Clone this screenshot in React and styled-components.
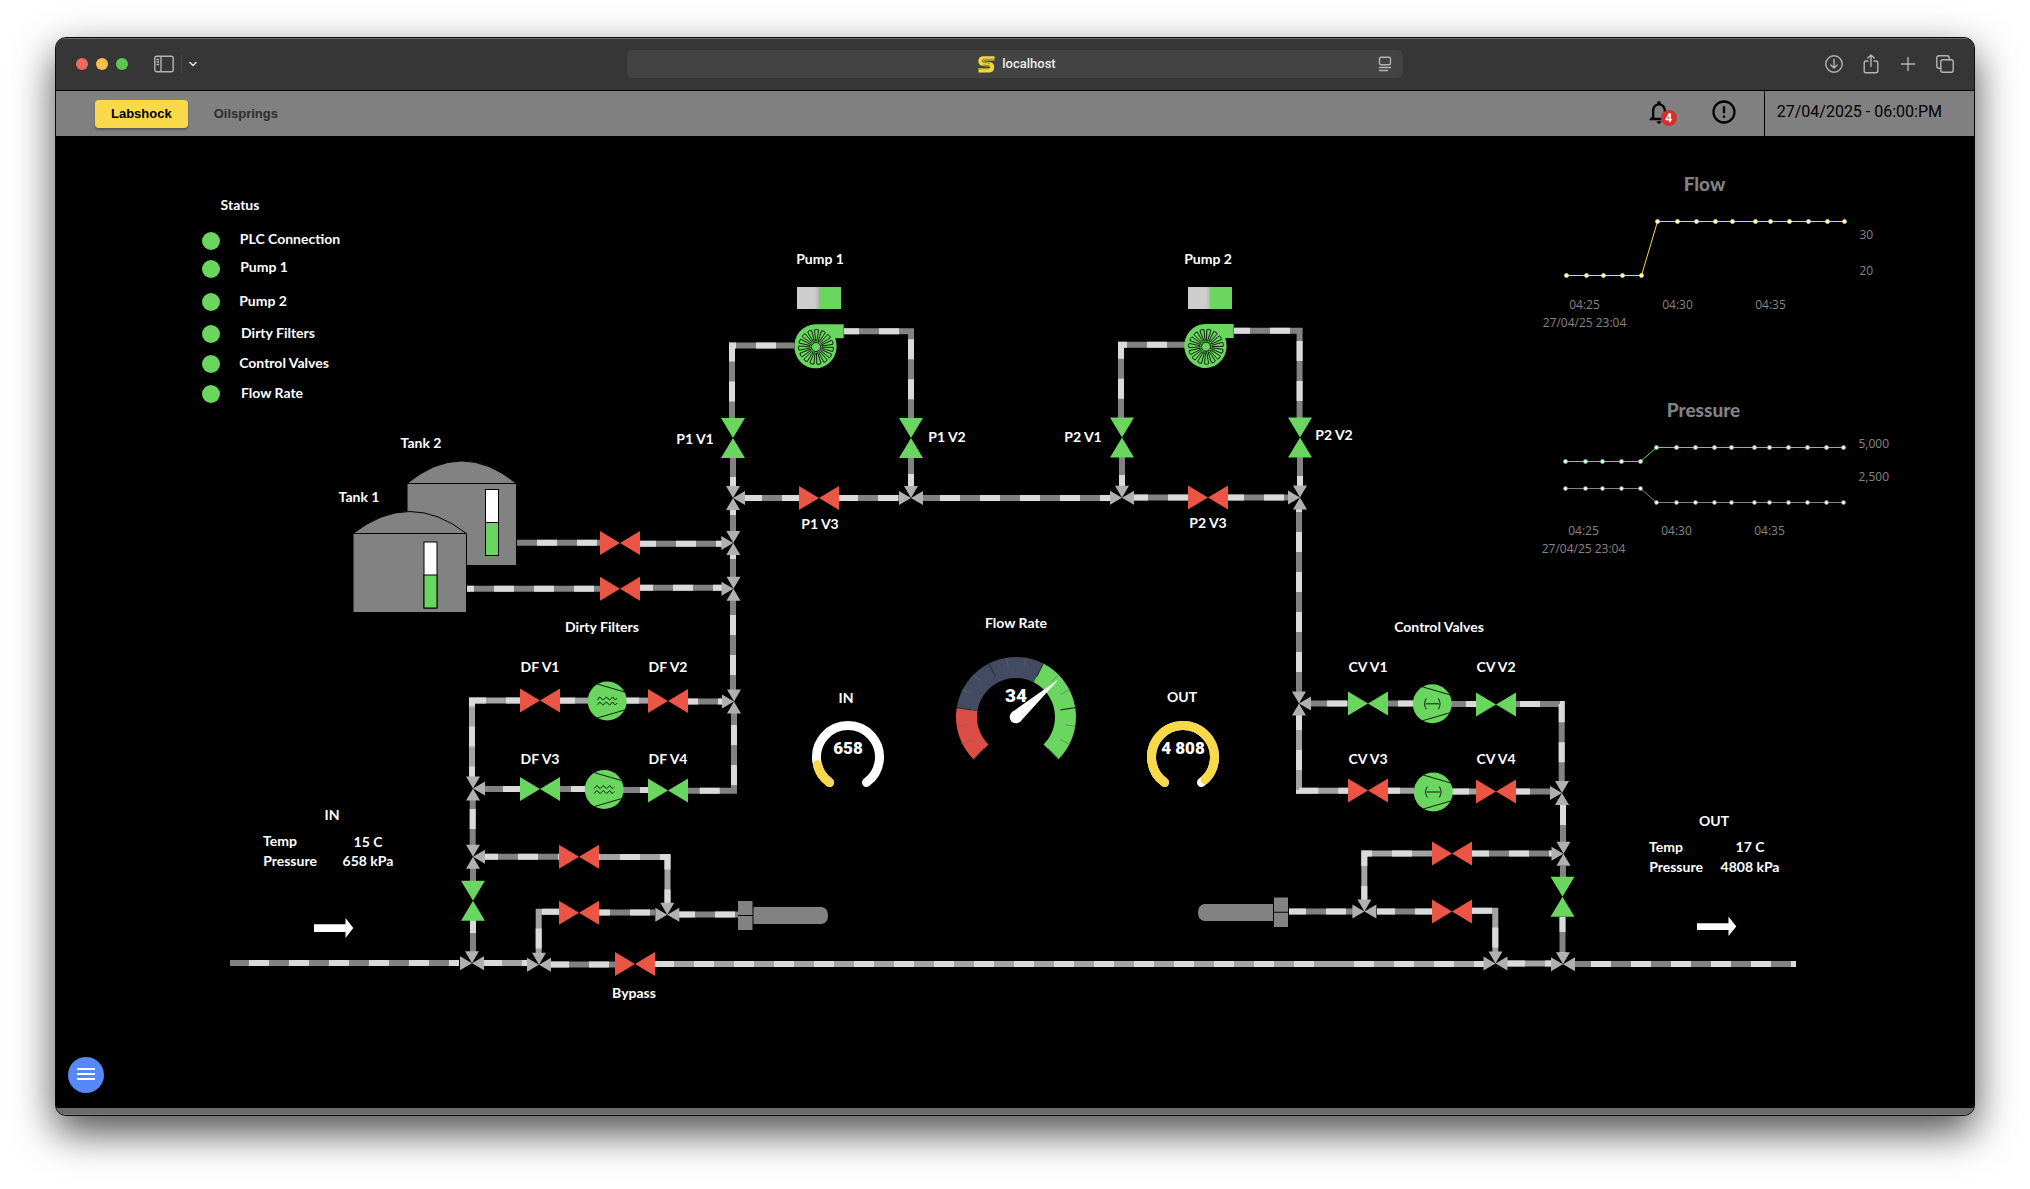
import React from "react";
import styled, { createGlobalStyle } from "styled-components";
import { MdNotificationsNone, MdErrorOutline } from "react-icons/md";

const GREEN = "#6ad55f";
const RED = "#eb5545";
const YELLOW = "#f9d949";
const STEEL = "#828282";
const LIGHT = "#dadada";
const ARROW = "#b0b0b0";

/* Diagram coordinates are window based; the stage starts at this point. */
const OX = 56;
const OY = 136;

const GlobalStyle = createGlobalStyle`
  * { box-sizing: border-box; }
  body { margin: 0; background: #fff; font-family: "Liberation Sans", Arial, sans-serif; }
  button { font: inherit; border: 0; padding: 0; background: none; cursor: pointer; }
`;

const Page = styled.div`
  display: flex;
  min-height: 100vh;
  padding: 37px 55px 73px;
`;

const BrowserWindow = styled.div`
  flex: 1;
  min-width: 0;
  display: flex;
  flex-direction: column;
  overflow: hidden;
  border: 1px solid #0a0a0a;
  border-radius: 11px;
  background: #6b6b6b;
  box-shadow: 0 16px 40px rgba(0, 0, 0, 0.7);
`;

const Toolbar = styled.div`
  display: grid;
  grid-template-columns: 1fr minmax(0, 776px) 1fr;
  align-items: center;
  height: 53px;
  padding: 0 20px 1px;
  background: #363636;
  border-top: 1px solid #6a6a6a;
  border-bottom: 1px solid #000;
`;

const ToolGroup = styled.div`
  display: flex;
  align-items: center;
  justify-content: ${(p) => (p.$end ? "flex-end" : "flex-start")};
  gap: ${(p) => p.$gap}px;
`;

const SidebarGroup = styled.div`
  display: flex;
  align-items: center;
  gap: 7px;
  margin-left: 18px;
`;

const Light = styled.button`
  width: 12px;
  height: 12px;
  border-radius: 50%;
  background: ${(p) => p.$color};
`;

const ToolButton = styled.button`
  display: flex;
  color: #b4b4b4;
`;

const ToolDivider = styled.span`
  width: 1px;
  height: 18px;
  background: #4a4a4a;
`;

const AddressBar = styled.div`
  display: grid;
  grid-template-columns: 1fr auto 1fr;
  align-items: center;
  height: 28px;
  padding: 0 11px;
  border-radius: 6px;
  background: #434343;
`;

const Address = styled.button`
  grid-column: 2;
  display: flex;
  align-items: center;
  gap: 7px;
  padding-left: 4px;
  color: #ececec;
  font: 500 13px/16px Roboto, sans-serif;
`;

const ReaderSlot = styled(ToolButton)`
  justify-self: end;
`;

const Header = styled.header`
  display: flex;
  align-items: stretch;
  justify-content: space-between;
  height: 45px;
  background: #808080;
`;

const Nav = styled.nav`
  display: flex;
  align-items: center;
  gap: 10px;
  padding-left: 39px;
`;

const Tab = styled.button`
  height: 28px;
  padding: 0 16px;
  border-radius: 4px;
  font-weight: 700;
  font-size: 13px;
  line-height: 28px;
  color: ${(p) => (p.$active ? "#000" : "#2e2e2e")};
  background: ${(p) => (p.$active ? YELLOW : "transparent")};
  box-shadow: ${(p) => (p.$active ? "0 2px 2px rgba(0,0,0,.3)" : "none")};
`;

const HeaderTools = styled.div`
  display: flex;
  align-items: center;
`;

const IconButton = styled.button`
  position: relative;
  display: flex;
  margin-right: ${(p) => p.$space}px;
  margin-bottom: 4px;
  color: #000;
`;

const Badge = styled.span`
  position: absolute;
  left: 16px;
  top: 12px;
  width: 16px;
  height: 16px;
  border-radius: 50%;
  background: #d32f2f;
  color: #fff;
  font: 700 12px/16px Roboto, sans-serif;
  text-align: center;
`;

const Clock = styled.time`
  display: flex;
  align-items: center;
  align-self: stretch;
  padding: 0 32px 3px 12px;
  border-left: 1px solid #000;
  font: 400 16px/20px Roboto, sans-serif;
  color: #000;
`;

const Stage = styled.main`
  position: relative;
  flex: 1;
  min-height: 972px;
  overflow: hidden;
  background: #000;
`;

const StatusBar = styled.div`
  height: 7px;
  background: #6b6b6b;
  border-bottom: 1px solid #7d7d7d;
`;

const Diagram = styled.svg`
  position: absolute;
  inset: 0 auto auto 0;
  display: block;
`;

const Label = styled.span`
  position: absolute;
  left: ${(p) => p.$x - OX - 60}px;
  top: ${(p) => p.$y - OY - 10}px;
  width: 120px;
  color: #fff;
  font-family: ${(p) => (p.$size ? "Roboto" : "Lato")}, sans-serif;
  font-weight: ${(p) => (p.$size ? 900 : 700)};
  font-size: ${(p) => p.$size || 14}px;
  line-height: 20px;
  text-align: center;
  white-space: nowrap;
  pointer-events: none;
`;

const StatusDot = styled.span`
  position: absolute;
  left: ${202 - OX}px;
  top: ${(p) => p.$y - OY - 9}px;
  width: 18px;
  height: 18px;
  border-radius: 50%;
  background: ${GREEN};
`;

const Switch = styled.input`
  appearance: none;
  position: absolute;
  left: ${(p) => p.$x - OX}px;
  top: ${287 - OY}px;
  width: 44px;
  height: 22px;
  margin: 0;
  background: linear-gradient(90deg, #cdcdcd 0 18px, #b5b5b5 22px, ${GREEN} 22px);
  cursor: pointer;
`;

const MenuButton = styled.button`
  position: absolute;
  left: 12px;
  bottom: 15px;
  width: 36px;
  height: 36px;
  display: flex;
  flex-direction: column;
  align-items: center;
  justify-content: center;
  gap: 3px;
  padding-bottom: 2px;
  border-radius: 50%;
  background: #5788f7;
`;

const MenuLine = styled.span`
  width: 18px;
  height: 2px;
  background: #fff;
`;

const AxisText = styled.text`
  font: 400 12px "Open Sans", sans-serif;
  fill: #858585;
`;

const ChartTitle = styled.text`
  font: 900 19px Lato, sans-serif;
  fill: #828282;
  text-anchor: middle;
`;

/* [points, distance of the first light dash, base colour] */
const SOFT = "#a3a3a3";
const PIPES = [
  ["794,345.5 732,345.5 732,418", 18],
  ["844,331.3 911,331.3 911,418", -5],
  ["733,458 733,487", 19],
  ["911,458 911,488", 16],
  ["744,498 799,498", -2],
  ["839,498 900,498", -1],
  ["923,498 1111,498", 17],
  ["733,509 733,532", -14],
  ["733,555 733,578", -16],
  ["733,600 733,691", 15],
  ["517,542.7 600,542.7", 20],
  ["640,543.7 722,543.7", -4],
  ["467,588.7 600,588.7", 27],
  ["640,587.7 722,587.7", -7],
  ["1185,344.7 1121,344.7 1121,418", 18],
  ["1234,330.7 1299.6,330.7 1299.6,418", -4],
  ["1122,457 1122,487", 18],
  ["1300,457 1300,486", 19],
  ["1134,497.5 1188,497.5", -6],
  ["1228,497.5 1289,497.5", -4],
  ["1299,509 1299,692", 23],
  ["734,713 734,790.7 688,790.7", 12],
  ["560,789 585,789", 11],
  ["623,790 648,790", 17],
  ["484,789 520,789", 19],
  ["520,700.5 472,700.5 472,777", -6, SOFT],
  ["560,700.6 588,700.6", -5, SOFT],
  ["626,700.6 648,700.6", -7, SOFT],
  ["688,701.6 722,701.6", -10],
  ["472.7,800 472.7,845", 9],
  ["484,856.7 559,856.7", -6],
  ["599,857 667.5,857 667.5,904", 21, SOFT],
  ["679,914.4 738,914.4", -4],
  ["599,912.6 655,912.6", -9],
  ["559,911.7 538.7,911.7 538.7,954", -3, SOFT],
  ["473,868 473,881", 20],
  ["473,920 473,952", -7],
  ["230,963 459,963", 19],
  ["484,963 527,963", -2, SOFT],
  ["551,964.4 615,964.4", -2],
  ["655,964 1334,964", -1, SOFT],
  ["1334,964 1484,964", 20, SOFT],
  ["1507,963.6 1551,963.6", -2, SOFT],
  ["1575,964 1796,964", 16],
  ["1310,703.5 1348,703.5", 17],
  ["1388,703.5 1413,703.5", 10],
  ["1451,704 1476,704", 15],
  ["1516,704 1561.7,704 1561.7,782", 4],
  ["1299,715 1299,790.7 1348,790.7", -5, SOFT],
  ["1388,790.7 1414,790.7", -8, SOFT],
  ["1452,791.5 1476,791.5", -3, SOFT],
  ["1516,791.6 1551,791.6", -6],
  ["1563,805 1563,843", 0],
  ["1472,853.6 1553,853.6", -3],
  ["1432,853.6 1364.3,853.6 1364.3,901", 20, SOFT],
  ["1289,911.4 1353,911.4", -3],
  ["1377,911.4 1432,911.4", -2],
  ["1472,910.7 1495.3,910.7 1495.3,952", 0, SOFT],
  ["1563,866 1563,878", 20],
  ["1562.5,917 1562.5,953", -5],
];

/* [x, y, vertical, open] */
const VALVES = [
  [733, 438, 1, 1], [911, 438, 1, 1], [1122, 437.5, 1, 1], [1300, 437.5, 1, 1],
  [819, 498, 0, 0], [1208, 497.5, 0, 0], [620, 543, 0, 0], [620, 588.7, 0, 0],
  [540, 700.6, 0, 0], [668, 701, 0, 0], [540, 789, 0, 1], [668, 790.5, 0, 1],
  [579, 856.7, 0, 0], [579, 912.7, 0, 0], [635, 964, 0, 0], [473, 900.7, 1, 1],
  [1368, 703.5, 0, 1], [1496, 704.5, 0, 1], [1368, 790.6, 0, 0], [1496, 791.5, 0, 0],
  [1452, 853.5, 0, 0], [1452, 911.5, 0, 0], [1562.5, 896.8, 1, 1],
];

const JUNCTIONS = [
  [733, 498, "TRB"], [911, 498, "LTR"], [733.3, 543, "TBL"], [733.5, 588.7, "TBL"],
  [1122, 497.8, "LTR"], [1300, 497.5, "TBL"], [734, 701.5, "TBL"], [473, 788.6, "TRB"],
  [473, 856.8, "TRB"], [667.3, 914.7, "LTR"], [472, 963.3, "LTR"], [539, 964.7, "LTR"],
  [1299, 703.6, "TRB"], [1562, 793, "TBL"], [1563.5, 853.8, "TBL"], [1364.4, 911.6, "LTR"],
  [1495.5, 963.5, "LTR"], [1563, 964.2, "LTR"],
];

const LABELS = [
  ["Status", 240, 205], ["PLC Connection", 290, 239], ["Pump 1", 264, 267], ["Pump 2", 263, 301],
  ["Dirty Filters", 278, 333], ["Control Valves", 284, 363], ["Flow Rate", 272, 393],
  ["Tank 2", 421, 443], ["Tank 1", 359, 497], ["Pump 1", 820, 259], ["Pump 2", 1208, 259],
  ["P1 V1", 695, 439], ["P1 V2", 947, 437], ["P1 V3", 820, 524],
  ["P2 V1", 1083, 437], ["P2 V2", 1334, 435], ["P2 V3", 1208, 523],
  ["Dirty Filters", 602, 627], ["DF V1", 540, 667], ["DF V2", 668, 667], ["DF V3", 540, 759], ["DF V4", 668, 759],
  ["Flow Rate", 1016, 623], ["IN", 846, 698], ["OUT", 1182, 697],
  ["Control Valves", 1439, 627], ["CV V1", 1368, 667], ["CV V2", 1496, 667], ["CV V3", 1368, 759], ["CV V4", 1496, 759],
  ["Bypass", 634, 993],
  ["IN", 332, 815], ["Temp", 280, 841], ["15 C", 368, 842], ["Pressure", 290, 861], ["658 kPa", 368, 861],
  ["OUT", 1714, 821], ["Temp", 1666, 847], ["17 C", 1750, 847], ["Pressure", 1676, 867], ["4808 kPa", 1750, 867],
  ["34", 1016, 696, 19], ["658", 848, 748, 17], ["4 808", 1183, 748, 17],
];

const polar = (cx, cy, r, deg) => {
  const a = (deg * Math.PI) / 180;
  return [cx + r * Math.cos(a), cy + r * Math.sin(a)];
};

const arc = (cx, cy, r, a, b) => {
  const [x1, y1] = polar(cx, cy, r, a);
  const [x2, y2] = polar(cx, cy, r, b);
  return `M${x1} ${y1}A${r} ${r} 0 ${b - a > 180 ? 1 : 0} 1 ${x2} ${y2}`;
};

function Pipe({ points, start, base = STEEL }) {
  return (
    <g fill="none" strokeWidth="6">
      <polyline points={points} stroke={base} />
      <polyline points={points} stroke={LIGHT} strokeDasharray="20 20" strokeDashoffset={-start} />
    </g>
  );
}

function Valve({ x, y, vertical, open }) {
  return (
    <path
      transform={`translate(${x} ${y})${vertical ? " rotate(90)" : ""}`}
      d="M-20-12L0 0L-20 12ZM20-12L0 0L20 12Z"
      fill={open ? GREEN : RED}
    />
  );
}

const TURN = { L: 0, T: 90, R: 180, B: 270 };

function Junction({ x, y, sides }) {
  return (
    <g transform={`translate(${x} ${y})`} fill={ARROW}>
      {[...sides].map((s) => (
        <path key={s} transform={`rotate(${TURN[s]})`} d="M-12-7L0 0L-12 7Z" />
      ))}
    </g>
  );
}

function Pump({ x, y, turn }) {
  return (
    <g transform={`translate(${x} ${y})`}>
      <path d="M0-22H28V-8H19.5A21.2 22 0 1 1 0-22Z" fill={GREEN} />
      <g transform="translate(0.3 0.7)" fill="none" stroke="#000" strokeWidth=".8">
        {Array.from({ length: 15 }, (_, i) => (
          <path key={i} transform={`rotate(${turn + i * 24})`} d="M-.6-6L-2.100-17Q0-18.200 2.100-17L.6-6Z" />
        ))}
        <circle r="4.600" fill={GREEN} strokeWidth="1" />
      </g>
    </g>
  );
}

function Tank({ x, y, width, height, dome, level }) {
  return (
    <g>
      <path
        d={`M${x} ${y}Q${x + width / 2} ${y - dome * 2} ${x + width} ${y}V${y + height}H${x}Z`}
        fill={STEEL}
        stroke="#000"
      />
      <path d={`M${x} ${y}H${x + width}`} stroke="#000" />
      <rect x={level[0]} y={level[1]} width="13" height="66" fill="#fff" stroke="#000" />
      <rect x={level[0]} y={level[1] + 33} width="13" height="33" fill={GREEN} stroke="#000" />
    </g>
  );
}

function Unit({ x, y, kind }) {
  return (
    <g transform={`translate(${x} ${y})`} fill="none" stroke="#0b1f09" strokeWidth="1">
      <circle r="19.5" fill={GREEN} stroke="none" />
      <path d="M-10-17L17.5-9M17.5 9L-10 17" />
      {kind === "filter" ? (
        <path d="M-10-1L-7.5-4L-4-1L-1-4L2.5-1L5.5-4L8-1L10-3M-10 4L-7.5 1L-4 4L-1 1L2.5 4L5.5 1L8 4L10 2" />
      ) : (
        <path d="M-6-5.5Q-9.5 0-6 5.5M6-5.5Q9.5 0 6 5.5M-6.5 0H6.5" />
      )}
    </g>
  );
}

function RingGauge({ x, y, end }) {
  return (
    <g fill="none" strokeWidth="9" strokeLinecap="round">
      <path d={arc(x, y, 31.5, 126, 414)} stroke="#fff" />
      <path d={arc(x, y, 31.5, 126, end)} stroke={YELLOW} />
    </g>
  );
}

function FlowGauge({ x, y }) {
  const zones = [[135, 189, "#dc4e45"], [189, 297, "#434b63"], [297, 405, GREEN]];
  return (
    <g>
      {zones.map(([a, b, c]) => (
        <path key={a} d={arc(x, y, 49.5, a, b)} stroke={c} strokeWidth="21" fill="none" />
      ))}
      {Array.from({ length: 16 }, (_, i) => {
        const major = i % 3 === 0;
        const [x1, y1] = polar(x, y, 60, 135 + i * 18);
        const [x2, y2] = polar(x, y, major ? 45 : 50, 135 + i * 18);
        return (
          <line key={i} x1={x1} y1={y1} x2={x2} y2={y2}
            stroke={major ? "#333" : "#666"} strokeOpacity={major ? 1 : 0.8} strokeWidth={major ? 1.3 : 0.8} />
        );
      })}
      <g transform={`translate(${x} ${y}) rotate(318.6)`} fill="#fff">
        <circle r="6.3" />
        <path d="M0-6.3L57 0L0 6.3Z" />
      </g>
    </g>
  );
}

const SAMPLES = [0, 20, 37, 56, 75, 91, 111, 130, 149, 166, 189, 204, 223, 242, 261, 278];

function Trend({ title, x, y, lines, axis }) {
  return (
    <g transform={`translate(${x} ${y})`}>
      <ChartTitle x="138" y="-31">{title}</ChartTitle>
      {lines.map(({ color, low, high }) => {
        const pts = SAMPLES.map((s, i) => [s, i < 5 ? low : high]);
        return (
          <g key={color}>
            <polyline points={pts.join(" ")} fill="none" stroke={color} strokeWidth="1" />
            {pts.map(([px, py]) => (
              <circle key={px} cx={px} cy={py} r="2" fill="#fff" stroke={color} strokeWidth=".8" />
            ))}
          </g>
        );
      })}
      {axis.map(([t, ay]) => (
        <AxisText key={t} x="293" y={ay}>{t}</AxisText>
      ))}
      <AxisText x="18" y="87" textAnchor="middle">04:25</AxisText>
      <AxisText x="111" y="87" textAnchor="middle">04:30</AxisText>
      <AxisText x="204" y="87" textAnchor="middle">04:35</AxisText>
      <AxisText x="18" y="105" textAnchor="middle">27/04/25 23:04</AxisText>
    </g>
  );
}

function PlantDiagram() {
  return (
    <Diagram width="1918" height="972" viewBox={`${OX} ${OY} 1918 972`} role="img" aria-label="Plant overview">
      <Tank x={407} y={483.5} width={109.5} height={82} dome={22.5} level={[485.5, 489.5]} />
      <Tank x={353} y={533.5} width={113.5} height={79} dome={22} level={[424, 542]} />
      {PIPES.map(([points, start, base]) => (
        <Pipe key={points} points={points} start={start} base={base} />
      ))}
      {VALVES.map(([x, y, vertical, open]) => (
        <Valve key={`${x}-${y}`} x={x} y={y} vertical={vertical} open={open} />
      ))}
      {JUNCTIONS.map(([x, y, sides]) => (
        <Junction key={`${x}-${y}`} x={x} y={y} sides={sides} />
      ))}
      <Pump x={815.7} y={346.3} turn={2} />
      <Pump x={1205.7} y={346} turn={10} />
      <Unit x={607.2} y={701} kind="filter" />
      <Unit x={604.2} y={789.6} kind="filter" />
      <Unit x={1432.3} y={703.8} kind="control" />
      <Unit x={1433.3} y={792} kind="control" />
      <g fill={STEEL}>
        <path d="M738 901h14.5v14H738ZM738 916h14.5v14H738ZM753.5 907H822q6 1 6 8.5t-6 8.5H753.5Z" />
        <path d="M1274 897.5h14v14.3h-14ZM1274 912.8h14v14.2h-14ZM1273 904H1204q-6 1-6 8.5t6 8.5H1273Z" />
      </g>
      <g fill="#fff">
        <path d="M314 924.3H345.5V918L353.3 928L345.5 938V932H314Z" />
        <path d="M1697 923.3H1728.5V916.5L1736.3 926.5L1728.5 936V930H1697Z" />
      </g>
      <RingGauge x={848} y={757} end={166} />
      <RingGauge x={1183} y={757} end={406} />
      <FlowGauge x={1016} y={717} />
      <Trend
        title="Flow" x={1566.5} y={221.5}
        lines={[{ color: YELLOW, low: 54, high: 0 }]}
        axis={[["30", 17], ["20", 53]]}
      />
      <Trend
        title="Pressure" x={1565.5} y={447.5}
        lines={[{ color: GREEN, low: 14, high: 0 }, { color: "#858585", low: 41, high: 55 }]}
        axis={[["5,000", 0], ["2,500", 33]]}
      />
    </Diagram>
  );
}

const Glyph = ({ children, size = 18, width = size }) => (
  <svg width={width} height={size} viewBox={`0 0 ${width} ${size}`} fill="none" stroke="currentColor"
    strokeWidth="1.4" strokeLinecap="round" strokeLinejoin="round" aria-hidden="true">
    {children}
  </svg>
);

function SafariBar() {
  return (
    <Toolbar>
      <ToolGroup $gap={8}>
        <Light $color="#ed6a5e" aria-label="Close" />
        <Light $color="#f5bf4f" aria-label="Minimize" />
        <Light $color="#61c554" aria-label="Zoom" />
        <SidebarGroup>
          <ToolButton aria-label="Show sidebar">
            <Glyph size={18} width={20}>
              <rect x="0.8" y="1.2" width="18.4" height="15.6" rx="2" />
              <path d="M7 1.5V16.5M3 4.5H4.6M3 7H4.6M3 9.5H4.6" />
            </Glyph>
          </ToolButton>
          <ToolDivider />
          <ToolButton aria-label="Tab groups">
            <Glyph size={8} width={8}><path strokeWidth="1.6" d="M1 2.5L4 5.5L7 2.5" stroke="#ddd" /></Glyph>
          </ToolButton>
        </SidebarGroup>
      </ToolGroup>
      <AddressBar>
        <Address>
          <svg width="17" height="17" viewBox="0 0 17 17" fill="none" aria-hidden="true">
            <path d="M16.5 2.4H6Q2.5 2.4 2.5 5Q2.500 7.500 5.500 7.700L11 8.200Q14 8.500 14 11.200Q14 14.300 10.500 14.300H.5" stroke="#f4d73f" strokeWidth="4.400" />
            <path d="M16.500 3.200H6.500Q4 3.400 4 5Q4 6.400 6 6.600L12 7.300M1 12.800H9.500Q12 12.600 12 11Q12 9.700 10 9.500L5 9" stroke="#6a6020" strokeWidth=".7" />
          </svg>
          localhost
        </Address>
        <ReaderSlot aria-label="Page menu">
          <Glyph size={16} width={14}>
            <rect x="1.5" y="1.2" width="11" height="7.5" rx="1.5" />
            <path d="M1.5 11.5H12.5M1.5 14.5H9.5" />
          </Glyph>
        </ReaderSlot>
      </AddressBar>
      <ToolGroup $gap={19} $end>
        <ToolButton aria-label="Downloads">
          <Glyph><circle cx="9" cy="9" r="8.2" /><path d="M9 4.500V13M5.800 10L9 13L12.200 10" /></Glyph>
        </ToolButton>
        <ToolButton aria-label="Share">
          <Glyph size={20} width={18}><path d="M6 7H4Q2.200 7 2.200 8.800V17Q2.200 18.800 4 18.800H14Q15.800 18.800 15.800 17V8.800Q15.800 7 14 7H12M9 12.500V1M5.800 4L9 1L12.200 4" /></Glyph>
        </ToolButton>
        <ToolButton aria-label="New tab">
          <Glyph><path d="M9 2.500V15.500M2.500 9H15.500" /></Glyph>
        </ToolButton>
        <ToolButton aria-label="Tab overview">
          <Glyph><rect x="4.8" y="4.8" width="12.4" height="12.4" rx="2" /><path d="M4.800 13.200H3Q.8 13.200 .8 11V3Q.8 .8 3 .8H11Q13.200 .8 13.200 3V4.800" /></Glyph>
        </ToolButton>
      </ToolGroup>
    </Toolbar>
  );
}

export default function App() {
  return (
    <>
      <GlobalStyle />
      <Page>
        <BrowserWindow>
          <SafariBar />
          <Header>
            <Nav>
              <Tab $active>Labshock</Tab>
              <Tab>Oilsprings</Tab>
            </Nav>
            <HeaderTools>
              <IconButton $space={37} aria-label="Notifications">
                <MdNotificationsNone size={28} />
                <Badge>4</Badge>
              </IconButton>
              <IconButton $space={26} aria-label="Alarms">
                <MdErrorOutline size={28} />
              </IconButton>
              <Clock>27/04/2025 - 06:00:PM</Clock>
            </HeaderTools>
          </Header>
          <Stage>
            <PlantDiagram />
            {[241, 269, 302, 334, 364, 394].map((y) => (
              <StatusDot key={y} $y={y} />
            ))}
            {LABELS.map(([text, x, y, size]) => (
              <Label key={`${x}-${y}`} $x={x} $y={y} $size={size}>{text}</Label>
            ))}
            <Switch type="checkbox" role="switch" defaultChecked aria-label="Pump 1" $x={797} />
            <Switch type="checkbox" role="switch" defaultChecked aria-label="Pump 2" $x={1188} />
            <MenuButton aria-label="Menu">
              <MenuLine /><MenuLine /><MenuLine />
            </MenuButton>
          </Stage>
          <StatusBar />
        </BrowserWindow>
      </Page>
    </>
  );
}
